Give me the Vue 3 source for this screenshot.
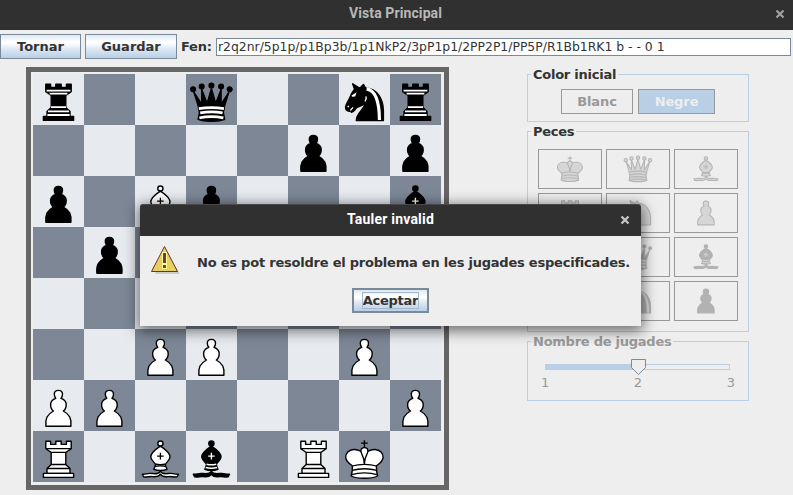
<script setup>
import { h } from 'vue'

const fen = 'r2q2nr/5p1p/p1Bp3b/1p1NkP2/3pP1p1/2PP2P1/PP5P/R1Bb1RK1 b - - 0 1'

// The position as eight rows of eight cells; '' is an empty square.
const rows = fen
  .split(' ')[0]
  .split('/')
  .map((r) => r.replace(/\d/g, (d) => ' '.repeat(Number(d))).split('').map((c) => c.trim()))

const palette = ['K', 'Q', 'B', 'R', 'N', 'P', 'k', 'q', 'b', 'r', 'n', 'p']

// b: body outline, l: thin detail lines, w: light bands on the dark piece
const shapes = {
  p: {
    b: ['M12.9 46.3C12.2 38.5 14 34.5 20.5 31C17.8 29.3 17.6 26.5 17.6 24.5C17.6 21.8 19.4 19.4 22.8 18.3C21.3 17 21.3 15.4 21.3 14.3C21.3 12 23.1 10.4 25.4 10.4C27.7 10.4 29.5 12 29.5 14.3C29.5 15.4 29.5 17 28 18.3C31.4 19.4 33.2 21.8 33.2 24.5C33.2 26.5 33 29.3 30.3 31C36.8 34.5 38.6 38.5 37.9 46.3Z'],
  },
  r: {
    b: [
      'M12.8 10.3H17.6V13.4H22.8V10.3H28.2V13.4H33.4V10.3H38.2V17.6L32.8 21.5V33.4L37 37.4V42.4H14V37.4L18.2 33.4V21.5L12.8 17.6Z',
      'M10.4 42.4H40.6V46.4H10.4Z',
    ],
    l: 'M13 17.6H38M18 21.4H33M18 33.5H33M14.2 37.5H37',
    w: 'M13.6 16.6H37.4M16.6 19.7H34.4M18 33.2H33M15 37.3H36M14.4 41H36.6',
    size: 'mid',
  },
  b: {
    b: [
      'M25.4 40C27 43.8 31 42.6 35.5 42.4C38.5 42.2 41 43.8 43.5 43.2L42.2 45.8C39 46.4 36.5 45.2 33.5 45.6C29.5 46.2 27 45.8 25.4 43.2C23.8 45.8 21.3 46.2 17.3 45.6C14.3 45.2 11.8 46.4 8.6 45.8L7.3 43.2C9.8 43.8 12.3 42.2 15.3 42.4C19.8 42.6 23.8 43.8 25.4 40Z',
      'M20.8 33H30L32 38.4C28 39.8 22.8 39.8 18.8 38.4Z',
      'M25.4 15.1C28.4 17.4 35 20.8 35 26.1C35 29 32 30.6 30.6 33C27.4 34 23.4 34 20.2 33C18.8 30.6 15.8 29 15.8 26.1C15.8 20.8 22.4 17.4 25.4 15.1Z',
      'M25.4 10C27 10 28 11 28 12.5C28 14 27 15 25.4 15C23.8 15 22.8 14 22.8 12.5C22.8 11 23.8 10 25.4 10Z',
    ],
    l: 'M25.4 21.8V28.4M22.1 25.1H28.7M20.2 35.4C23.6 34.6 27.2 34.6 30.6 35.4',
    w: 'M25.4 21.8V28.4M22.1 25.1H28.7M20.6 33.2C23.8 34 27 34 30.2 33.2M19.6 36.5C23.4 37.5 27.4 37.5 31.2 36.5',
  },
  q: {
    b: [
      'M12.2 32.4L7.4 17L15.6 29.8L15.6 14.6L21.1 29L25.4 13.8L29.7 29L35.2 14.6L35.2 29.8L43.4 17L38.6 32.4C38.9 35.4 37.2 36.5 37.6 39L38.8 45.6C33 48 17.8 48 12 45.6L13.2 39C13.6 36.5 11.9 35.4 12.2 32.4Z',
      'M4.6 15.3a2.5 2.5 0 1 0 5 0a2.5 2.5 0 1 0-5 0M13.2 12.6a2.5 2.5 0 1 0 5 0a2.5 2.5 0 1 0-5 0M22.9 11.6a2.5 2.5 0 1 0 5 0a2.5 2.5 0 1 0-5 0M32.6 12.6a2.5 2.5 0 1 0 5 0a2.5 2.5 0 1 0-5 0M41.2 15.3a2.5 2.5 0 1 0 5 0a2.5 2.5 0 1 0-5 0',
    ],
    l: 'M12.4 33.4C20 31.4 30.8 31.4 38.4 33.4M13.4 37.4C20 35.6 30.8 35.6 37.4 37.4M13.2 41.4C20 39.8 30.8 39.8 37.6 41.4M12.6 45C20 43.2 30.8 43.2 38.2 45',
    w: 'M12.8 34.6C20 33.4 30.8 33.4 38 34.6M14.2 38.9C20 37.9 30.8 37.9 36.6 38.9M13.4 43.8C20 42.6 30.8 42.6 37.4 43.8',
    size: 'wide',
  },
  k: {
    b: [
      'M25.4 33V25.5C24.5 21 20 18.3 14.8 18.5C9.6 18.7 6.6 22.4 6.7 26.4C6.9 30.6 10.4 32.4 13.4 35L13.2 40L12.2 45C18 48 32.8 48 38.6 45L37.6 40L37.4 35C40.4 32.4 43.9 30.6 44.1 26.4C44.2 22.4 41.2 18.7 36 18.5C30.8 18.3 26.3 21 25.4 25.5',
      'M25.4 32C25.4 26 21.9 23 21.9 20C21.9 17.9 23.4 16.6 25.4 16.6C27.4 16.6 28.9 17.9 28.9 20C28.9 23 25.4 26 25.4 32Z',
    ],
    l: 'M25.4 9.2V16.4M22 12.2H28.8M13.4 35C20 32.8 30.8 32.8 37.4 35M13.2 39.4C20 37.2 30.8 37.2 37.6 39.4M12.8 43.6C20 41.2 30.8 41.2 38 43.6',
    w: 'M14 36.5C20 35 30.8 35 36.8 36.5M13.8 41C20 39.5 30.8 39.5 37 41',
  },
  n: {
    b: ['M17.3 46.6C17.3 38.5 25 36.5 27 28C24.5 32.2 20 32 17.6 33.8C15.6 35.6 14.8 38.6 12.2 38.2L13.2 35.8L10.4 37.4C7.6 37 6.4 35.4 6.5 32.8C7.4 29 10.2 26 11.5 22C12.4 18.8 14.4 17 15.6 15.2L13.6 9.8L19.4 13.4L20.8 14.2L24.4 10.4L26.6 14C38 14.6 44.4 25 44.4 37V46.6Z'],
    l: 'M27 28C28 26 28 24 27 22M12.8 22.4L16 20.6M8.8 32.6L10 31.6',
    w: 'M12.9 22L16.3 19.9L15.7 21.8ZM26 27.4C27.4 25.8 27.4 24 27 22.4M8.8 33.2L9.8 31.8M11.4 36.4L14 33.4',
    mane: 'M27.6 14.8C36 16.2 40.4 26 40.4 46',
  },
}

// Functional component: one piece, drawn from its FEN letter.
const Piece = ({ code }) => {
  const dark = code === code.toLowerCase()
  const s = shapes[code.toLowerCase()]
  const kids = s.b.map((d) => h('path', { d, class: 'body' }))
  if (s.l && (!dark || code === 'k')) kids.push(h('path', { d: s.l, class: 'line' }))
  if (dark && s.w) kids.push(h('path', { d: s.w, class: ['band', s.size] }))
  if (dark && s.mane) kids.push(h('path', { d: s.mane, class: 'band mane' }))
  return h('g', { class: [dark ? 'dark' : 'light', 'piece-' + code] }, kids)
}
Piece.props = ['code']
</script>

<template>
  <div class="window">
    <header class="titlebar">
      <span class="caption">Vista Principal</span>
      <svg class="close" viewBox="0 0 10 10"><path d="M1.5 1.5L8.5 8.5M8.5 1.5L1.5 8.5" /></svg>
    </header>

    <div class="toolbar">
      <button class="btn tornar">Tornar</button>
      <button class="btn guardar">Guardar</button>
      <label class="fen-label">Fen:</label>
      <div class="field"><span>{{ fen }}</span></div>
    </div>

    <main class="content">
      <div class="board">
        <template v-for="(row, y) in rows" :key="y">
          <div v-for="(c, x) in row" :key="x" class="cell" :class="{ odd: (x + y) % 2 }">
            <svg v-if="c" viewBox="0 0 51 51"><Piece :code="c" /></svg>
          </div>
        </template>
      </div>

      <aside class="side">
        <section class="group color">
          <h2>Color inicial</h2>
          <div class="toggles">
            <button class="toggle">Blanc</button>
            <button class="toggle on">Negre</button>
          </div>
        </section>

        <section class="group pieces">
          <h2>Peces</h2>
          <div class="grid">
            <button v-for="c in palette" :key="c" class="slot">
              <svg viewBox="0 3 51 51"><Piece :code="c" /></svg>
            </button>
          </div>
        </section>

        <section class="group moves">
          <h2 class="off">Nombre de jugades</h2>
          <svg class="slider" viewBox="0 0 187 18">
            <rect x="0.5" y="6.5" width="184" height="5" class="track" />
            <rect x="0" y="6" width="93" height="5" class="fill" />
            <path d="M86.5 1.5H100.5V9.5L93.5 16.5L86.5 9.5Z" class="thumb" />
          </svg>
          <div class="ticks"><span>1</span><span>2</span><span>3</span></div>
        </section>
      </aside>
    </main>

    <div class="dialog">
      <header class="dialog-bar">
        <span class="caption">Tauler invalid</span>
        <svg class="close" viewBox="0 0 10 10"><path d="M1.5 1.5L8.5 8.5M8.5 1.5L1.5 8.5" /></svg>
      </header>
      <div class="message">
        <svg class="warn" viewBox="0 0 30 30">
          <path d="M15 5L29 29H4Z" class="shade" />
          <path d="M13.5 1.5L26.5 26.5H0.5Z" class="tri" />
          <path d="M11 7H16V24H11Z" class="glow" />
          <path d="M12 8H15V18H12ZM12 20H15V23H12Z" class="mark" />
        </svg>
        <span class="text">No es pot resoldre el problema en les jugades especificades.</span>
      </div>
      <button class="accept"><span>Aceptar</span></button>
    </div>
  </div>
</template>

<style>
body {
  margin: 0;
}
</style>

<style scoped>
.window {
  position: relative;
  width: 793px;
  height: 495px;
  overflow: hidden;
  background: #eeeeee;
  color: #333333;
  font: bold 13px/15px 'DejaVu Sans', sans-serif;
  letter-spacing: -0.25px;
}
button {
  box-sizing: border-box;
  margin: 0;
  padding: 0;
  font: inherit;
  letter-spacing: inherit;
  color: inherit;
}
.titlebar {
  display: flex;
  align-items: center;
  height: 30px;
  background: #303030;
  color: #b8b8b8;
}
.caption {
  flex: 1;
  text-align: center;
  font: bold 14px/16px Roboto, sans-serif;
  letter-spacing: 0.1px;
}
.titlebar .caption {
  padding: 0 0 4px 16px;
}
.close {
  width: 10px;
  height: 10px;
  fill: none;
  stroke: #a0a0a0;
  stroke-width: 2.2;
}
.titlebar .close {
  margin-right: 8px;
  margin-top: -2px;
}
.toolbar {
  display: flex;
  align-items: center;
  height: 33px;
  padding-right: 2px;
}
.btn {
  height: 25px;
  border: 1px solid #7a8a99;
  background: linear-gradient(#dde8f3 0%, #ffffff 30%, #ffffff 36%, #dde8f3 60%, #b8cfe5 100%);
  letter-spacing: 0;
}
.tornar {
  width: 81px;
  margin-right: 4px;
}
.guardar {
  width: 92px;
  margin-right: 4px;
}
.fen-label {
  width: 35px;
}
.field {
  flex: 1;
  box-sizing: border-box;
  height: 18px;
  padding-left: 1px;
  border: 1px solid #7a8a99;
  background: #ffffff;
  font: 12.4px/16px 'DejaVu Sans', sans-serif;
  letter-spacing: 0;
  white-space: pre;
}
.content {
  display: flex;
  padding: 4px 0 0 26px;
}
.board {
  display: grid;
  grid-template-columns: repeat(8, 51px);
  grid-auto-rows: 51px;
  padding: 2px 3px 3px 2px;
  border: 5px solid #666666;
}
.cell {
  background: #e7ebf0;
}
.cell.odd {
  background: #7d8796;
}
.cell svg {
  display: block;
  width: 51px;
  height: 51px;
}
svg :deep(.body) {
  stroke: #000000;
  stroke-width: 1.4;
  stroke-linejoin: round;
}
svg :deep(.light .body) {
  fill: #ffffff;
}
svg :deep(.dark .body) {
  fill: #000000;
}
svg :deep(.piece-q .body) {
  stroke-width: 1.1;
}
svg :deep(.line) {
  fill: none;
  stroke: #000000;
  stroke-width: 1.3;
}
svg :deep(.band) {
  fill: none;
  stroke: #ffffff;
  stroke-width: 1.4;
}
svg :deep(.mid) {
  stroke-width: 1.8;
}
svg :deep(.wide) {
  stroke-width: 2.8;
}
svg :deep(.mane) {
  stroke-width: 3.2;
}
.side {
  width: 222px;
  margin-left: 78px;
  padding-top: 7px;
}
.group {
  box-sizing: border-box;
  border: 1px solid #b8cfe5;
}
.group h2 {
  width: max-content;
  height: 15px;
  margin: -8px 0 0 3px;
  padding: 0 2px;
  background: #eeeeee;
  font: inherit;
}
.group .off {
  color: #999999;
}
.color {
  height: 48px;
}
.toggles {
  display: flex;
  gap: 5px;
  padding: 7px 0 0 33px;
}
.toggle {
  width: 72px;
  height: 25px;
  border: 1px solid #999999;
  background: #eeeeee;
  color: #999999;
  letter-spacing: -0.1px;
}
.toggle.on {
  width: 77px;
  background: #b8cfe5;
  color: #eeeeee;
}
.pieces {
  height: 201px;
  margin-top: 9px;
}
.grid {
  display: grid;
  grid-template-columns: repeat(3, 64px);
  grid-auto-rows: 40px;
  gap: 4px;
  padding: 10px 0 0 10px;
}
.slot {
  display: flex;
  align-items: center;
  justify-content: center;
  border: 1px solid #999999;
  background: #eeeeee;
}
.slot svg {
  width: 34px;
  height: 34px;
}
.slot :deep(.body),
.slot :deep(.line) {
  stroke: #b5b5b5;
  stroke-width: 1.6;
}
.slot :deep(.light .body) {
  fill: #d6d6d6;
}
.slot :deep(.dark .body) {
  fill: #b2b2b2;
  stroke: #b2b2b2;
}
.slot :deep(.band) {
  stroke: #d8d8d8;
}
.moves {
  height: 60px;
  margin-top: 9px;
}
.slider {
  display: block;
  width: 187px;
  height: 18px;
  margin: 9px 0 0 17px;
}
.track {
  fill: #eeeeee;
  stroke: #b8cfe5;
}
.fill {
  fill: #b8cfe5;
}
.thumb {
  fill: #eeeeee;
  stroke: #7a8a99;
}
.ticks {
  display: flex;
  justify-content: space-between;
  margin-top: -1px;
  padding: 0 13px;
  color: #999999;
  font-weight: normal;
  letter-spacing: 0;
}
.dialog {
  position: absolute;
  left: 140px;
  top: 204px;
  width: 501px;
  height: 122px;
  display: flex;
  flex-direction: column;
  border-radius: 3px 3px 0 0;
  background: #eeeeee;
  box-shadow: 0 3px 14px 2px rgba(0, 0, 0, 0.55);
}
.dialog-bar {
  display: flex;
  align-items: center;
  box-sizing: border-box;
  height: 32px;
  border-top: 1px solid #484848;
  border-radius: 3px 3px 0 0;
  background: #303030;
  color: #ffffff;
}
.dialog-bar .caption {
  padding: 0 0 3px 21px;
  letter-spacing: 0.2px;
}
.dialog-bar .close {
  margin: -2px 11px 0 0;
  stroke: #c8c8c8;
}
.message {
  display: flex;
  height: 52px;
  padding-left: 11px;
}
.warn {
  width: 30px;
  height: 30px;
  margin: 9px 16px 0 0;
}
.shade {
  fill: #cccccc;
}
.tri {
  fill: #e8d060;
  stroke: #663333;
}
.glow {
  fill: #ffffa0;
}
.mark {
  fill: #7a3a30;
}
.text {
  margin-top: 19px;
  letter-spacing: -0.22px;
  white-space: nowrap;
}
.accept {
  width: 77px;
  height: 25px;
  margin-left: 212px;
  padding: 2px;
  border: 2px solid #7a8a99;
  background: linear-gradient(#dde8f3 0%, #ffffff 30%, #ffffff 36%, #dde8f3 60%, #b8cfe5 100%);
  line-height: 15px;
}
.accept span {
  display: inline-block;
  outline: 1px solid #a3b8cc;
}
</style>
